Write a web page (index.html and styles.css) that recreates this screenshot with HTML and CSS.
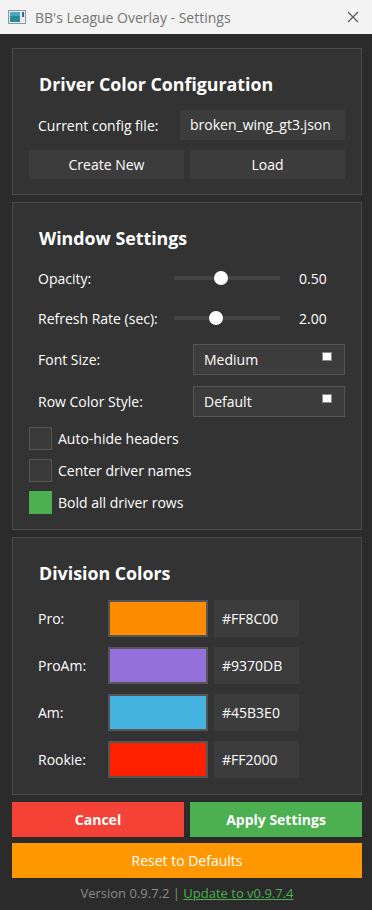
FILE: index.html
```html
<!DOCTYPE html>
<html lang="en">
<head>
    <meta charset="UTF-8">
    <title>BB's League Overlay - Settings</title>
    <link rel="stylesheet" href="styles.css">
</head>
<body>
    <div class="titlebar">
        <svg class="app-icon" width="18" height="14" viewBox="0 0 18 14">
            <rect x="0.5" y="0.5" width="17" height="13" fill="#e8eef2" stroke="#8a9aa4"/>
            <rect x="2" y="2" width="10" height="10" fill="#2a8a9a"/>
            <rect x="2" y="2" width="10" height="4" fill="#4aa8c0"/>
            <rect x="14" y="2" width="2" height="5" fill="#3a6a8a"/>
        </svg>
        <span class="title-text">BB's League Overlay - Settings</span>
        <svg class="close" width="12" height="12" viewBox="0 0 12 12">
            <path d="M1 1L11 11M11 1L1 11" stroke="#555" stroke-width="1.1"/>
        </svg>
    </div>

    <div class="window">
        <div class="group">
            <h2>Driver Color Configuration</h2>
            <div class="row">
                <span class="label">Current config file:</span>
                <span class="field">broken_wing_gt3.json</span>
            </div>
            <div class="btn-row">
                <button class="btn">Create New</button>
                <button class="btn">Load</button>
            </div>
        </div>

        <div class="group">
            <h2>Window Settings</h2>
            <div class="slider-row">
                <span class="label">Opacity:</span>
                <div class="slider"><div class="thumb" style="left: 40px"></div></div>
                <span class="value">0.50</span>
            </div>
            <div class="slider-row">
                <span class="label">Refresh Rate (sec):</span>
                <div class="slider"><div class="thumb" style="left: 35px"></div></div>
                <span class="value">2.00</span>
            </div>
            <div class="combo-row">
                <span class="label">Font Size:</span>
                <div class="combo">Medium<span class="arrow"></span></div>
            </div>
            <div class="combo-row">
                <span class="label">Row Color Style:</span>
                <div class="combo">Default<span class="arrow"></span></div>
            </div>
            <div class="check"><span class="box"></span>Auto-hide headers</div>
            <div class="check"><span class="box"></span>Center driver names</div>
            <div class="check"><span class="box on"></span>Bold all driver rows</div>
        </div>

        <div class="group">
            <h2 class="div-title">Division Colors</h2>
            <div class="color-row">
                <span class="label">Pro:</span>
                <span class="swatch" style="background: #FF8C00"></span>
                <span class="hex">#FF8C00</span>
            </div>
            <div class="color-row">
                <span class="label">ProAm:</span>
                <span class="swatch" style="background: #9370DB"></span>
                <span class="hex">#9370DB</span>
            </div>
            <div class="color-row">
                <span class="label">Am:</span>
                <span class="swatch" style="background: #45B3E0"></span>
                <span class="hex">#45B3E0</span>
            </div>
            <div class="color-row">
                <span class="label">Rookie:</span>
                <span class="swatch" style="background: #FF2000"></span>
                <span class="hex">#FF2000</span>
            </div>
        </div>

        <div class="action-row">
            <button class="btn-cancel">Cancel</button>
            <button class="btn-apply">Apply Settings</button>
        </div>
        <button class="btn-reset">Reset to Defaults</button>
        <div class="version">Version 0.9.7.2 | <a href="#">Update to v0.9.7.4</a></div>
    </div>
</body>
</html>
```

FILE: styles.css
```css
body {
    margin: 0;
    width: 372px;
    height: 910px;
    font-family: "Open Sans", "Noto Sans", sans-serif;
    font-size: 14px;
    color: #ffffff;
    background-color: #2b2b2b;
    overflow: hidden;
}
.titlebar {
    height: 34px;
    background-color: #f3f3f3;
    display: flex;
    align-items: center;
    padding: 0 13px 0 8px;
    box-sizing: border-box;
}
.app-icon {
    margin-right: 9px;
}
.title-text {
    flex: 1;
    color: #747474;
    font-size: 14px;
}
.window {
    padding: 14px 10px 0 12px;
    display: flex;
    flex-direction: column;
}
.group {
    border: 1px solid #4a4a4a;
    background-color: #333333;
    padding: 20px 16px 15px 16px;
    margin-bottom: 7px;
}
h2 {
    font-size: 17.8px;
    font-weight: bold;
    margin: 3px 0 14px 10px;
    line-height: 24px;
}
.row {
    display: flex;
    align-items: center;
    justify-content: space-between;
    padding-left: 9px;
    margin-bottom: 10px;
}
.field {
    background-color: #3c3c3c;
    width: 165px;
    height: 30px;
    line-height: 30px;
    padding-left: 10px;
    box-sizing: border-box;
}
.btn-row {
    display: flex;
    gap: 6px;
}
.btn {
    flex: 1;
    height: 29px;
    background-color: #3c3c3c;
    color: #ffffff;
    border: none;
    font-family: inherit;
    font-size: 14px;
}
.slider-row {
    display: flex;
    align-items: center;
    padding-left: 9px;
    height: 28px;
    margin-bottom: 12px;
}
.slider-row .label {
    width: 136px;
}
.slider {
    position: relative;
    width: 106px;
    height: 4px;
    background-color: #444444;
    margin-right: 19px;
}
.thumb {
    position: absolute;
    top: -5px;
    width: 14px;
    height: 14px;
    border-radius: 50%;
    background-color: #ffffff;
}
.combo-row {
    display: flex;
    align-items: center;
    justify-content: space-between;
    padding-left: 9px;
    margin-bottom: 11px;
}
.combo-row + .combo-row {
    margin-bottom: 10px;
}
.combo {
    position: relative;
    width: 152px;
    height: 31px;
    line-height: 29px;
    background-color: #3c3c3c;
    border: 1px solid #555555;
    box-sizing: border-box;
    padding-left: 10px;
}
.arrow {
    position: absolute;
    right: 12px;
    top: 7px;
    width: 8px;
    height: 7px;
    background-color: #ffffff;
    border: 1px solid #888;
}
.check {
    display: flex;
    align-items: center;
    margin-bottom: 9px;
}
.check:last-child {
    margin-bottom: 0;
}
.box {
    width: 21px;
    height: 21px;
    background-color: #3a3a3a;
    border: 1px solid #555555;
    margin-right: 6px;
}
.box.on {
    background-color: #4caf50;
    border-color: #4caf50;
}
.div-title {
    margin-bottom: 15px;
}
.color-row {
    display: flex;
    align-items: center;
    padding-left: 9px;
    margin-bottom: 10px;
}
.color-row:last-child {
    margin-bottom: 1px;
}
.color-row .label {
    width: 70px;
}
.swatch {
    width: 96px;
    height: 33px;
    border: 2px solid #555555;
    margin-right: 6px;
}
.hex {
    background-color: #3c3c3c;
    width: 85px;
    height: 37px;
    line-height: 37px;
    padding-left: 8px;
    box-sizing: border-box;
}
.action-row {
    display: flex;
    gap: 6px;
}
.action-row button, .btn-reset {
    height: 35px;
    border: none;
    color: #ffffff;
    font-family: inherit;
    font-size: 14px;
}
.action-row button {
    flex: 1;
}
.btn-cancel {
    background-color: #f44336;
    font-weight: bold;
}
.btn-apply {
    background-color: #4caf50;
    font-weight: bold;
}
.btn-reset {
    margin-top: 6px;
    background-color: #ff9800;
}
.version {
    text-align: center;
    color: #8a8a8a;
    margin-top: 6px;
    font-size: 13px;
}
.version a {
    color: #4caf50;
}
```
